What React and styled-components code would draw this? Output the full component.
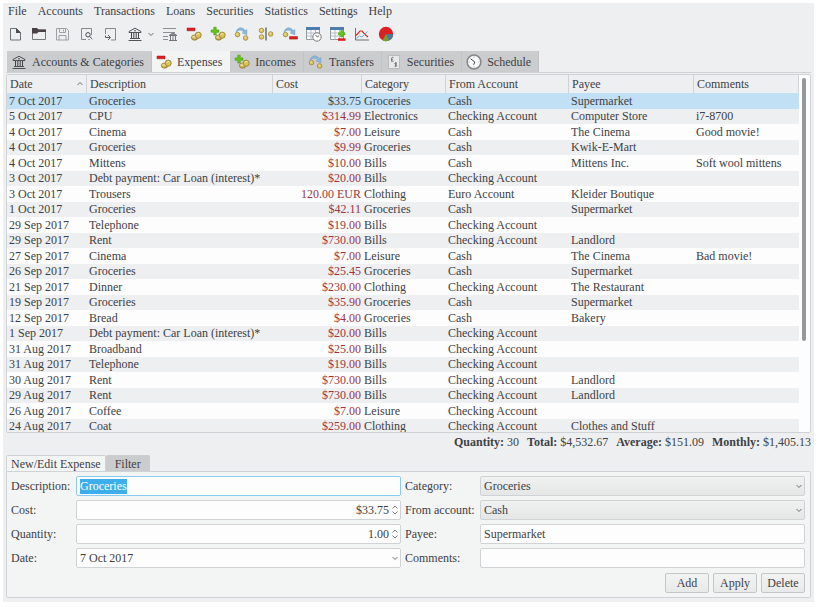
import { useId } from 'react'
import styled, { createGlobalStyle } from 'styled-components'

const colors = {
    window: '#eeeff1',
    panel: '#f3f4f4',
    base: '#fdfdfd',
    text: '#3d4144',
    border: '#d0d3d5',
    tab: '#cbcccd',
    selection: '#c1dff5',
    focus: '#8ccbf0',
    highlight: '#3daee9',
    expense: '#9c3540',
}

const GlobalStyle = createGlobalStyle`
    * {
        box-sizing: border-box;
    }
    body {
        margin: 0;
        background: #ffffff;
        color: ${colors.text};
        font: 12px/16px "Liberation Serif", serif;
    }
    button, input, select {
        margin: 0;
        color: inherit;
        font: inherit;
    }
    svg {
        display: block;
        flex: none;
    }
`

/**
 * Page and window frame.
 */
const Page = styled.div`
    height: 100vh;
    padding: 3px 5px 5px 3px;
`

const Window = styled.main`
    display: flex;
    flex-direction: column;
    height: 100%;
    padding: 0 3px 4px;
    background: ${colors.window};
`

/**
 * Menu bar and tool bar.
 */
const MenuBar = styled.nav`
    display: flex;
    gap: 11px;
    padding: 0 2px;
`

const MenuItem = styled.button`
    padding: 0;
    border: 0;
    background: none;
    line-height: 16px;
`

const ToolBar = styled.div`
    display: flex;
    gap: 8px;
    padding: 7px 1px 9px;
`

const ToolButton = styled.button`
    display: flex;
    align-items: center;
    gap: 5px;
    padding: 0;
    border: 0;
    background: none;
    opacity: ${({ $dim }) => ($dim ? 0.6 : 1)};
`

/**
 * Main tabs with icons.
 */
const TabBar = styled.div`
    display: flex;
    border-bottom: 1px solid ${colors.border};
    margin-bottom: 1px;
    padding-left: 1px;
`

const Tab = styled.button`
    display: flex;
    align-items: center;
    gap: 5px;
    height: 21px;
    padding: 0 7px 0 4px;
    border: 0;
    border-right: 1px solid ${({ $active }) => ($active ? colors.panel : '#c2c4c5')};
    background: ${({ $active }) => ($active ? colors.panel : colors.tab)};
    line-height: 20px;
    white-space: nowrap;
`

/**
 * Transactions table.
 */
const TableFrame = styled.div`
    display: flex;
    flex: 1;
    min-height: 0;
    overflow: hidden;
    border: 1px solid ${colors.border};
    border-radius: 2px;
    background: ${colors.base};
`

const Table = styled.table`
    flex: 1;
    align-self: flex-start;
    width: 100%;
    table-layout: fixed;
    border-collapse: separate;
    border-spacing: 0;
`

const Col = styled.col`
    width: ${({ $width }) => ($width ? `${$width}px` : 'auto')};
`

const HeadCell = styled.th`
    height: 18px;
    padding: 0 3px;
    border-right: 1px solid ${colors.border};
    background: ${colors.window};
    font-weight: normal;
    text-align: left;
`

const HeadContent = styled.span`
    display: flex;
    align-items: center;
    justify-content: space-between;
`

const Row = styled.tr`
    background: ${colors.base};
    line-height: 16px;
    &:nth-child(even) {
        background: ${colors.window};
        line-height: 15px;
    }
    &[aria-selected='true'] {
        background: ${colors.selection};
    }
`

const Cell = styled.td`
    padding: 0 1px 0 2px;
    white-space: nowrap;
`

const CostCell = styled(Cell)`
    color: ${({ $plain }) => ($plain ? colors.text : colors.expense)};
    text-align: right;
`

const ScrollTrack = styled.div`
    flex: none;
    width: 11px;
    padding: 3px;
`

const ScrollThumb = styled.div`
    width: 4px;
    height: 75%;
    border-radius: 2px;
    background: #959799;
`

/**
 * Totals under the table.
 */
const Summary = styled.p`
    display: flex;
    justify-content: flex-end;
    gap: 8px;
    margin: 1px 0 5px;
`

/**
 * Editing form.
 */
const FormTabs = styled.div`
    display: flex;
`

const FormTab = styled.button`
    height: 16px;
    padding: 0 ${({ $active }) => ($active ? 4 : 8)}px;
    border: 1px solid ${({ $active }) => ($active ? colors.border : colors.tab)};
    border-bottom: 0;
    border-radius: 2px 2px 0 0;
    background: ${({ $active }) => ($active ? colors.panel : colors.tab)};
    line-height: 12px;
`

const FormPanel = styled.form`
    padding: 4px 5px 4px 4px;
    border: 1px solid ${colors.border};
    border-radius: 0 2px 2px 2px;
    background: ${colors.panel};
`

const Fields = styled.div`
    display: grid;
    grid-template-columns: 61px 1fr 71px 1fr;
    gap: 4px;
    align-items: center;
`

const Label = styled.label`
    white-space: nowrap;
`

const Control = styled.div`
    display: grid;
    grid-template-columns: 1fr 8px;
    align-items: center;
    height: 20px;
    border: 1px solid ${colors.border};
    border-radius: 2px;
    background: ${({ $raised }) => ($raised ? 'linear-gradient(#f0f1f1, #e5e7e7)' : colors.base)};
    &:focus-within {
        border-color: ${colors.focus};
    }
    > svg {
        grid-area: 1 / 2;
        pointer-events: none;
    }
`

const TextInput = styled.input`
    grid-area: 1 / 1 / 2 / ${({ $number }) => ($number ? 2 : 3)};
    width: 100%;
    min-width: 0;
    height: 18px;
    padding: 0 3px;
    border: 0;
    outline: 0;
    background: none;
    text-align: ${({ $number }) => ($number ? 'right' : 'left')};
    &::selection {
        background: ${colors.highlight};
        color: #ffffff;
    }
`

const Select = styled.select`
    grid-area: 1 / 1 / 2 / 3;
    appearance: none;
    width: 100%;
    height: 18px;
    padding: 0 3px;
    border: 0;
    outline: 0;
    background: none;
`

const Actions = styled.div`
    display: flex;
    justify-content: flex-end;
    gap: 4px;
    margin-top: 5px;
`

const ActionButton = styled.button`
    min-width: 44px;
    height: 20px;
    padding: 0 4px;
    border: 1px solid #c3c6c8;
    border-radius: 2px;
    background: linear-gradient(#f2f3f3, #e8eaea);
    line-height: 16px;
`

const Icon = ({ children }) => (
    <svg width="16" height="16" viewBox="0 0 16 16" fill="none" aria-hidden="true">
        {children}
    </svg>
)

const Chevron = ({ up }) => (
    <svg width="6" height="6" viewBox="0 0 6 6" fill="none" stroke="#6b6f72" aria-hidden="true">
        <path d={up ? 'M.5 4 3 1.5 5.5 4' : 'M.5 2 3 4.5 5.5 2'} />
    </svg>
)

const SpinArrows = () => (
    <svg width="6" height="10" viewBox="0 0 6 10" fill="none" stroke="#7b7f82" aria-hidden="true">
        <path d="M.5 3.5 3 1l2.5 2.5M.5 6.5 3 9l2.5-2.5" />
    </svg>
)

const Coin = ({ x, y, r = 2.3 }) => (
    <g>
        <circle cx={x} cy={y} r={r} fill="#dcc565" stroke="#a08638" strokeWidth=".8" />
        <path d={`M${x - 1} ${y - 0.7}h1.6`} stroke="#fbf0b4" strokeWidth=".8" />
    </g>
)

const CoinPile = () => (
    <>
        <ellipse cx="8.6" cy="11.6" rx="3.2" ry="2.6" fill="#c3a646" stroke="#937a2e" strokeWidth=".8" />
        <ellipse cx="8.4" cy="10.9" rx="2.4" ry="1.5" fill="#e6d488" />
        <ellipse cx="12.2" cy="9.2" rx="3" ry="3.1" fill="#d9c15a" stroke="#937a2e" strokeWidth=".8" />
        <path d="M10.7 8.6c.5-1.2 2-1.5 2.800-.5" stroke="#fbf0b4" strokeWidth=".9" />
    </>
)

const CurvedArrow = () => (
    <path d="M2 6.200C3.200 1 8.500.5 11.200 4.600l1.700-.9v5.100L8.200 7l1.500-1C7.800 3.600 4.800 3.500 2 6.200Z" fill="#8fb6d6" stroke="#6c9cc4" strokeWidth=".5" />
)

const Plus = () => (
    <path d="M3.800 1.200h2.400v2.700h2.700v2.400H6.200V9H3.800V6.300H1.100V3.900h2.700z" fill="#65c516" stroke="#479a12" strokeWidth=".6" />
)

const BankIcon = () => (
    <Icon>
        <path d="M2 5.5 8 2.200l6 3.300v1H2zM3 12.500h10M1.500 14.500h13" stroke="#3f4346" strokeWidth=".9" />
        <path d="M4.500 7v5M6.800 7v5M9.200 7v5M11.500 7v5" stroke="#3f4346" />
        <circle cx="8" cy="4.800" r=".8" fill="#3f4346" />
    </Icon>
)

const ExpenseIcon = () => (
    <Icon>
        <path d="M1 2h8v2.800H1z" fill="#d81f22" stroke="#b21518" strokeWidth=".5" />
        <CoinPile />
    </Icon>
)

const IncomeIcon = () => (
    <Icon>
        <CoinPile />
        <Plus />
    </Icon>
)

const TransferIcon = () => (
    <Icon>
        <CurvedArrow />
        <Coin x={3.5} y={8.6} />
        <Coin x={11.6} y={12} />
    </Icon>
)

const SecuritiesIcon = () => (
    <Icon>
        <path d="M2.500 1.500h11v13h-11z" fill="#e9e9e9" stroke="#b9bbbc" />
        <path d="M7.500 3.600c-1.400-.6-2.200 0-2 1.200l.2 2.200M5 5.300h2M5 7.200h2.600" stroke="#5c6063" strokeWidth=".8" />
        <path d="M11 9.200c-2-.7-2.800.1-2 .9l1.300.6c1.200.9-.1 1.800-1.800 1.200M9.800 8.300v4.700" stroke="#5c6063" strokeWidth=".8" />
    </Icon>
)

const ScheduleIcon = () => (
    <Icon>
        <circle cx="8" cy="8" r="6.900" fill="#fafafa" stroke="#85888a" strokeWidth="1.500" />
        <path d="M4.600 4.800 8.800 8 7.600 10.800" stroke="#44484b" />
        <path d="M8 2.500v1.200M8 12.300v1.200M2.500 8h1.200M12.300 8h1.200" stroke="#8f9294" strokeWidth=".8" />
    </Icon>
)

const NewIcon = () => (
    <Icon>
        <path d="M3.500 2.500h6l4 4v7.500h-10z" stroke="#6d7173" />
        <path d="M9 2l5 5H9z" fill="#4a4e51" />
    </Icon>
)

const OpenIcon = () => (
    <Icon>
        <path d="M1.500 13.500v-11h4L7 4h7.500v9.500z" stroke="#77797b" />
        <path d="M1 2h5l1.500 1.500H15V6H7.500L6 7.500H1z" fill="#4a4144" />
    </Icon>
)

const SaveIcon = () => (
    <Icon>
        <path d="M1.500 2.500h10l2 2v9.500h-12zM4.500 2.500v4h6v-4M4 14V9.500h7V14M8.500 3.500v2" stroke="#6a6e71" />
    </Icon>
)

const PreviewIcon = () => (
    <Icon>
        <path d="M7 13.500H2.500v-11h10V9" stroke="#85898b" />
        <circle cx="9" cy="8.800" r="2.200" stroke="#4a4e51" />
        <path d="m10.700 10.500 2.600 2.600M9.500 13.500h1" stroke="#4a4e51" />
    </Icon>
)

const ImportIcon = () => (
    <Icon>
        <path d="M2.500 8V2.500h10v11.500H8" stroke="#85898b" />
        <path d="M2.500 9.500v2h4.500M5 9l2.500 2.500L5 14" stroke="#5a5e61" />
    </Icon>
)

const LedgerIcon = () => (
    <Icon>
        <path d="M1 2.500h13M1 6.500h12M1 10.500h5M1 13.500h5" stroke="#8d9193" />
        <path d="m7 9.500 4-2.500 4 2.500zM8.500 10v4M11 10v4M13.500 10v4M7 14.500h8" fill="#8b8e90" stroke="#727679" />
    </Icon>
)

const SplitIcon = () => (
    <Icon>
        <Coin x={3.5} y={4.500} />
        <Coin x={3.5} y={11} />
        <Coin x={12.7} y={8} />
        <path d="M8 1.500v13" stroke="#4a4e51" strokeWidth="1.200" />
    </Icon>
)

const RefundIcon = () => (
    <Icon>
        <CurvedArrow />
        <Coin x={3.5} y={8.6} />
        <path d="M7.500 10.500h8v2.600h-8z" fill="#d81f22" stroke="#b21518" strokeWidth=".5" />
    </Icon>
)

const Sheet = () => (
    <>
        <path d="M.5 1.500h13v12H.5z" fill="#fafbfc" stroke="#959a9d" />
        <path d="M0 1h14v3H0z" fill="#4f7dab" />
        <path d="M1 7h12M1 10h12M5 4v9.500M9.500 4v9.500" stroke="#b4bdc4" />
    </>
)

const CalendarIcon = () => (
    <Icon>
        <Sheet />
        <circle cx="11" cy="11" r="4.200" fill="#fafafa" stroke="#777a7d" />
        <path d="m9.500 9 1.800 2L13 9.500" stroke="#44484b" strokeWidth=".8" />
    </Icon>
)

const EditSheetIcon = () => (
    <Icon>
        <Sheet />
        <path d="M10.700 4.500h2.200v2.200H15v2.200h-2.100v2.200h-2.200V8.900H8.500V6.700h2.200z" fill="#65c516" stroke="#479a12" strokeWidth=".5" />
        <path d="M8 12.300h7.500v2.500H8z" fill="#d81f22" />
    </Icon>
)

const ChartIcon = () => (
    <Icon>
        <path d="M1.500 2v12H15" stroke="#6f7376" />
        <path d="m2 9.500 4-4.500h2l3 3.500 3 2.500" stroke="#d92b2b" strokeWidth="1.200" />
        <path d="m2 12.500 3.500-2.500L8 11l5.500-5.500" stroke="#7faad0" />
    </Icon>
)

const PieIcon = () => (
    <Icon>
        <circle cx="8" cy="8" r="7.200" fill="#dc1f22" />
        <path d="M8 8h7.200A7.200 7.200 0 0 1 10.500 14.700z" fill="#52779f" />
        <path d="m8 8 3 6.600a7.200 7.200 0 0 1-6.500-.3z" fill="#6fa32d" />
    </Icon>
)

const menus = ['File', 'Accounts', 'Transactions', 'Loans', 'Securities', 'Statistics', 'Settings', 'Help']

const tools = [
    { name: 'New', icon: NewIcon },
    { name: 'Open', icon: OpenIcon },
    { name: 'Save', icon: SaveIcon, dim: true },
    { name: 'Print preview', icon: PreviewIcon },
    { name: 'Import', icon: ImportIcon },
    { name: 'New account', icon: BankIcon, menu: true },
    { name: 'Show ledger', icon: LedgerIcon },
    { name: 'New expense', icon: ExpenseIcon },
    { name: 'New income', icon: IncomeIcon },
    { name: 'New transfer', icon: TransferIcon },
    { name: 'Split transaction', icon: SplitIcon },
    { name: 'Refund', icon: RefundIcon },
    { name: 'Schedule', icon: CalendarIcon },
    { name: 'Edit transactions', icon: EditSheetIcon },
    { name: 'Chart', icon: ChartIcon },
    { name: 'Report', icon: PieIcon },
]

const tabs = [
    { name: 'Accounts & Categories', icon: BankIcon },
    { name: 'Expenses', icon: ExpenseIcon, active: true },
    { name: 'Incomes', icon: IncomeIcon },
    { name: 'Transfers', icon: TransferIcon },
    { name: 'Securities', icon: SecuritiesIcon },
    { name: 'Schedule', icon: ScheduleIcon },
]

const columns = [
    { name: 'Date', width: 80 },
    { name: 'Description', width: 186 },
    { name: 'Cost', width: 89 },
    { name: 'Category', width: 84 },
    { name: 'From Account', width: 123 },
    { name: 'Payee', width: 125 },
    { name: 'Comments' },
]

const expenses = [
    ['7 Oct 2017', 'Groceries', '$33.75', 'Groceries', 'Cash', 'Supermarket', ''],
    ['5 Oct 2017', 'CPU', '$314.99', 'Electronics', 'Checking Account', 'Computer Store', 'i7-8700'],
    ['4 Oct 2017', 'Cinema', '$7.00', 'Leisure', 'Cash', 'The Cinema', 'Good movie!'],
    ['4 Oct 2017', 'Groceries', '$9.99', 'Groceries', 'Cash', 'Kwik-E-Mart', ''],
    ['4 Oct 2017', 'Mittens', '$10.00', 'Bills', 'Cash', 'Mittens Inc.', 'Soft wool mittens'],
    ['3 Oct 2017', 'Debt payment: Car Loan (interest)*', '$20.00', 'Bills', 'Checking Account', '', ''],
    ['3 Oct 2017', 'Trousers', '120.00 EUR', 'Clothing', 'Euro Account', 'Kleider Boutique', ''],
    ['1 Oct 2017', 'Groceries', '$42.11', 'Groceries', 'Cash', 'Supermarket', ''],
    ['29 Sep 2017', 'Telephone', '$19.00', 'Bills', 'Checking Account', '', ''],
    ['29 Sep 2017', 'Rent', '$730.00', 'Bills', 'Checking Account', 'Landlord', ''],
    ['27 Sep 2017', 'Cinema', '$7.00', 'Leisure', 'Cash', 'The Cinema', 'Bad movie!'],
    ['26 Sep 2017', 'Groceries', '$25.45', 'Groceries', 'Cash', 'Supermarket', ''],
    ['21 Sep 2017', 'Dinner', '$230.00', 'Clothing', 'Checking Account', 'The Restaurant', ''],
    ['19 Sep 2017', 'Groceries', '$35.90', 'Groceries', 'Cash', 'Supermarket', ''],
    ['12 Sep 2017', 'Bread', '$4.00', 'Groceries', 'Cash', 'Bakery', ''],
    ['1 Sep 2017', 'Debt payment: Car Loan (interest)*', '$20.00', 'Bills', 'Checking Account', '', ''],
    ['31 Aug 2017', 'Broadband', '$25.00', 'Bills', 'Checking Account', '', ''],
    ['31 Aug 2017', 'Telephone', '$19.00', 'Bills', 'Checking Account', '', ''],
    ['30 Aug 2017', 'Rent', '$730.00', 'Bills', 'Checking Account', 'Landlord', ''],
    ['29 Aug 2017', 'Rent', '$730.00', 'Bills', 'Checking Account', 'Landlord', ''],
    ['26 Aug 2017', 'Coffee', '$7.00', 'Leisure', 'Checking Account', '', ''],
    ['24 Aug 2017', 'Coat', '$259.00', 'Clothing', 'Checking Account', 'Clothes and Stuff', ''],
]

const totals = [
    ['Quantity:', '30'],
    ['Total:', '$4,532.67'],
    ['Average:', '$151.09'],
    ['Monthly:', '$1,405.13'],
]

/**
 * One labelled text box. The label and the box are two cells of the form grid.
 */
const TextField = ({ label, number, ...props }) => {
    const id = useId()
    return (
        <>
            <Label htmlFor={id}>{label}</Label>
            <Control>
                <TextInput id={id} $number={number} {...props} />
                {number && <SpinArrows />}
            </Control>
        </>
    )
}

/**
 * One labelled drop-down.
 */
const SelectField = ({ label, value, raised }) => {
    const id = useId()
    return (
        <>
            <Label htmlFor={id}>{label}</Label>
            <Control $raised={raised}>
                <Select id={id} defaultValue={value}>
                    <option>{value}</option>
                </Select>
                <Chevron />
            </Control>
        </>
    )
}

const ExpenseTable = () => (
    <TableFrame>
        <Table>
            <colgroup>
                {columns.map((column) => (
                    <Col key={column.name} $width={column.width} />
                ))}
            </colgroup>
            <thead>
                <tr>
                    {columns.map((column, index) => (
                        <HeadCell key={column.name} scope="col">
                            <HeadContent>
                                {column.name}
                                {index === 0 && <Chevron up />}
                            </HeadContent>
                        </HeadCell>
                    ))}
                </tr>
            </thead>
            <tbody>
                {expenses.map((expense, row) => (
                    <Row key={row} aria-selected={row === 0}>
                        {expense.map((value, index) =>
                            index === 2 ? (
                                <CostCell key={index} $plain={row === 0}>{value}</CostCell>
                            ) : (
                                <Cell key={index}>{value}</Cell>
                            )
                        )}
                    </Row>
                ))}
            </tbody>
        </Table>
        <ScrollTrack>
            <ScrollThumb />
        </ScrollTrack>
    </TableFrame>
)

const ExpenseForm = () => (
    <FormPanel onSubmit={(event) => event.preventDefault()}>
        <Fields>
            <TextField label="Description:" defaultValue="Groceries" autoFocus onFocus={(event) => event.target.select()} />
            <SelectField label="Category:" value="Groceries" raised />
            <TextField label="Cost:" defaultValue="$33.75" number />
            <SelectField label="From account:" value="Cash" raised />
            <TextField label="Quantity:" defaultValue="1.00" number />
            <TextField label="Payee:" defaultValue="Supermarket" />
            <SelectField label="Date:" value="7 Oct 2017" />
            <TextField label="Comments:" />
        </Fields>
        <Actions>
            <ActionButton type="button">Add</ActionButton>
            <ActionButton type="submit">Apply</ActionButton>
            <ActionButton type="button">Delete</ActionButton>
        </Actions>
    </FormPanel>
)

const App = () => {
    return (
        <Page>
            <GlobalStyle />
            <Window>
                <MenuBar>
                    {menus.map((name) => (
                        <MenuItem key={name}>{name}</MenuItem>
                    ))}
                </MenuBar>
                <ToolBar role="toolbar">
                    {tools.map(({ name, icon: ToolIcon, dim, menu }) => (
                        <ToolButton key={name} aria-label={name} $dim={dim}>
                            <ToolIcon />
                            {menu && <Chevron />}
                        </ToolButton>
                    ))}
                </ToolBar>
                <TabBar role="tablist">
                    {tabs.map(({ name, icon: TabIcon, active }) => (
                        <Tab key={name} role="tab" aria-selected={!!active} $active={active}>
                            <TabIcon />
                            {name}
                        </Tab>
                    ))}
                </TabBar>
                <ExpenseTable />
                <Summary>
                    {totals.map(([name, value]) => (
                        <span key={name}>
                            <strong>{name}</strong> {value}
                        </span>
                    ))}
                </Summary>
                <FormTabs role="tablist">
                    <FormTab role="tab" aria-selected="true" $active>New/Edit Expense</FormTab>
                    <FormTab role="tab" aria-selected="false">Filter</FormTab>
                </FormTabs>
                <ExpenseForm />
            </Window>
        </Page>
    )
}

export default App
